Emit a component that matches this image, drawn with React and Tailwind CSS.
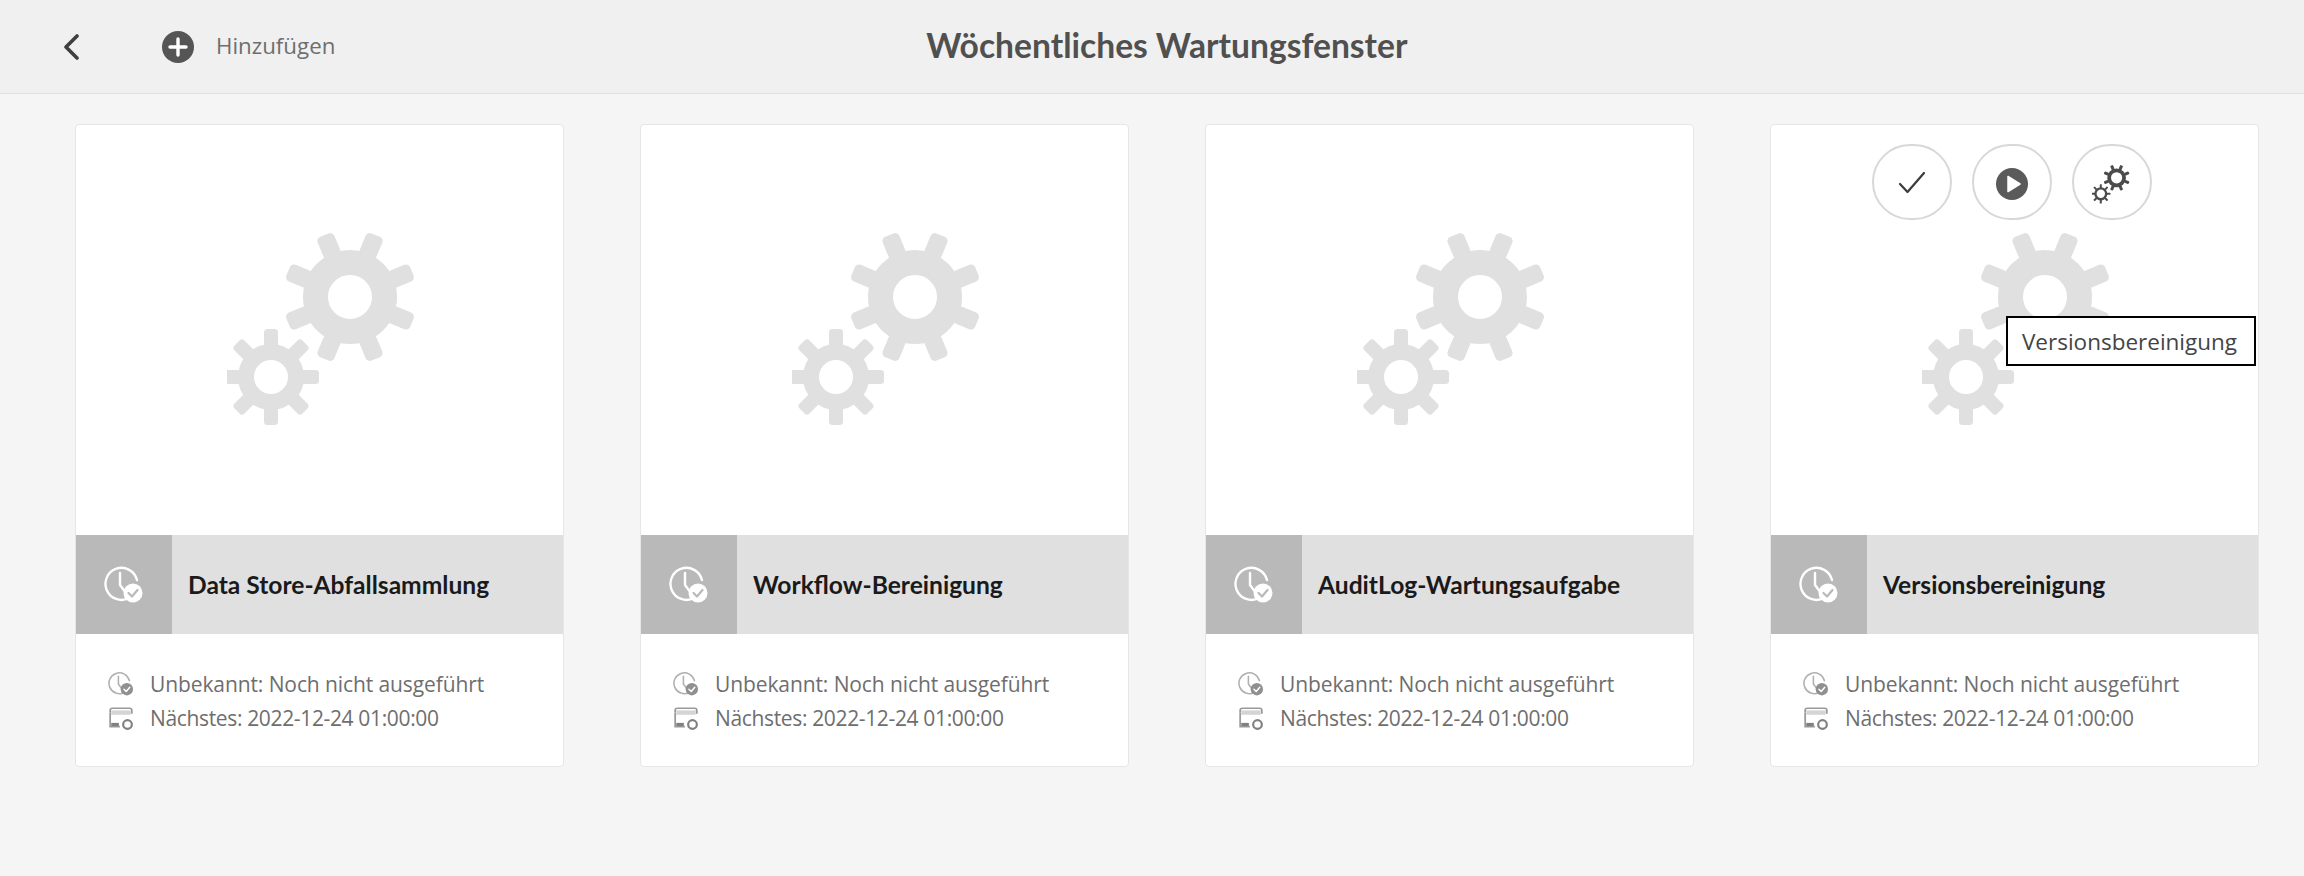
const tasks = ["Data Store-Abfallsammlung", "Workflow-Bereinigung", "AuditLog-Wartungsaufgabe", "Versionsbereinigung"];

function Gear({ cx, cy, body, hole, outer, tooth, rot }) {
  const angles = [0, 45, 90, 135, 180, 225, 270, 315];
  return (
    <g>
      <circle cx={cx} cy={cy} r={(body + hole) / 2} fill="none" stroke="currentColor" strokeWidth={body - hole} />
      {angles.map((a) => (
        <rect
          key={a}
          x={cx - tooth / 2}
          y={cy - outer}
          width={tooth}
          height={outer - body + 4}
          rx={tooth / 4}
          fill="currentColor"
          transform={`rotate(${a + rot} ${cx} ${cy})`}
        />
      ))}
    </g>
  );
}

function Gears({ className, thin }) {
  return (
    <svg viewBox="0 0 200 200" className={className}>
      <Gear cx={123} cy={69} body={47} hole={thin ? 28 : 22} outer={67} tooth={thin ? 15 : 18} rot={22.5} />
      <Gear cx={44} cy={149} body={33} hole={thin ? 21 : 17} outer={48} tooth={thin ? 10 : 14} rot={0} />
    </svg>
  );
}

function ClockCheck({ className, badge, mark }) {
  return (
    <svg viewBox="0 0 40 40" className={className} fill="none" stroke="currentColor">
      <path d="M25 33 A16 16 0 1 1 33 15" strokeWidth="2.4" strokeLinecap="round" />
      <path d="M16 8 V20 L22 28" strokeWidth="2.4" strokeLinecap="round" strokeLinejoin="round" />
      <circle cx="29" cy="28" r="9.5" fill={badge} stroke="none" />
      <path d="M24.5 28 L28 31.5 L33.5 25" stroke={mark} strokeWidth="2.2" strokeLinecap="round" strokeLinejoin="round" />
    </svg>
  );
}

function CalendarZero({ className }) {
  return (
    <svg viewBox="0 0 24 24" className={className} fill="none" stroke="#9a9a9a">
      <path d="M2 7 V5 Q2 3 4 3 H20 Q22 3 22 5 V8" strokeWidth="1.6" />
      <path d="M2 7 V20 H11" strokeWidth="1.6" />
      <rect x="3" y="5" width="18" height="4" fill="#d4d4d4" stroke="none" />
      <rect x="3" y="16.5" width="7" height="3" fill="#808080" stroke="none" />
      <circle cx="18" cy="18" r="4" strokeWidth="2" stroke="#808080" />
    </svg>
  );
}

function Card({ title, hovered }) {
  return (
    <div className="relative flex h-[643px] w-[488.6px] shrink-0 flex-col overflow-visible rounded-[4px] border border-[#e6e6e6] bg-white">
      <div className="flex h-[410px] items-center justify-center pb-[5px] text-[#e0e0e0]">
        <Gears className="ml-[16px] h-[200px] w-[200px]" />
      </div>
      <div className="flex h-[99px] items-stretch bg-[#e0e0e0]">
        <div className="flex w-[96px] items-center justify-center bg-[#b9b9b9] text-white">
          <ClockCheck className="h-[40px] w-[40px]" badge="#ffffff" mark="#b9b9b9" />
        </div>
        <div className="flex items-center pl-[16px] pt-[2px] font-['Lato',sans-serif] text-[24.6px] font-bold text-[#1a1a1a]">{title}</div>
      </div>
      <div className="flex flex-col pl-[32px] pt-[33px] font-['Open_Sans',sans-serif] text-[21px] leading-[34px] tracking-[-0.1px] text-[#6e6e6e]">
        <div className="flex items-center gap-[16px]">
          <ClockCheck className="h-[26px] w-[26px] text-[#b0b0b0]" badge="#909090" mark="#ffffff" />
          <span>Unbekannt: Noch nicht ausgeführt</span>
        </div>
        <div className="flex items-center gap-[16px]">
          <CalendarZero className="h-[26px] w-[26px]" />
          <span className="tracking-[-0.35px]">Nächstes: 2022-12-24 01:00:00</span>
        </div>
      </div>
      {hovered && (
        <>
          <div className="absolute left-[101px] top-[19px] flex gap-[20px]">
            <button className="flex h-[76px] w-[80px] items-center justify-center rounded-full border-2 border-[#d8d8d8] bg-white pt-[3px]">
              <svg viewBox="0 0 30 30" className="h-[30px] w-[30px]" fill="none" stroke="#3c3c3c" strokeWidth="2.2" strokeLinecap="round" strokeLinejoin="round">
                <path d="M3 15 L10.5 23 L27 4" />
              </svg>
            </button>
            <button className="flex h-[76px] w-[80px] items-center justify-center rounded-full border-2 border-[#d8d8d8] bg-white pt-[3px]">
              <svg viewBox="0 0 32 32" className="h-[32px] w-[32px]">
                <circle cx="16" cy="16" r="16" fill="#5a5a5a" />
                <path d="M12 8.5 L24 16 L12 23.5 Z" fill="#ffffff" stroke="#ffffff" strokeWidth="1.5" strokeLinejoin="round" />
              </svg>
            </button>
            <button className="flex h-[76px] w-[80px] items-center justify-center rounded-full border-2 border-[#d8d8d8] bg-white pt-[3px] text-[#4b4b4b]">
              <Gears thin className="h-[40px] w-[40px]" />
            </button>
          </div>
          <div className="absolute left-[235px] top-[191px] flex h-[50px] w-[250px] items-center border-2 border-black bg-white pl-[14px] pt-[2px] font-['Open_Sans',sans-serif] text-[22.5px] text-[#444444]">
            Versionsbereinigung
          </div>
        </>
      )}
    </div>
  );
}

export default function App() {
  return (
    <div className="h-[876px] w-[2304px] overflow-hidden bg-[#f5f5f5]">
      <header className="flex h-[94px] items-center border-b border-[#e0e0e0] bg-[#f0f0f0]">
        <svg viewBox="0 0 16 28" className="ml-[63px] h-[28px] w-[16px]" fill="none" stroke="#3f3f3f" strokeWidth="3.6" strokeLinecap="round" strokeLinejoin="round">
          <path d="M14 3 L3 14 L14 25" />
        </svg>
        <svg viewBox="0 0 32 32" className="ml-[83px] h-[32px] w-[32px]">
          <circle cx="16" cy="16" r="16" fill="#555555" />
          <path d="M16 8 V24 M8 16 H24" stroke="#ffffff" strokeWidth="3.4" strokeLinecap="round" />
        </svg>
        <span className="ml-[22px] mt-[-2px] font-['Open_Sans',sans-serif] text-[22.3px] text-[#6e6e6e]">Hinzufügen</span>
        <h1 className="ml-[591px] mt-[-3px] font-['Lato',sans-serif] text-[33.6px] font-bold text-[#505050]">Wöchentliches Wartungsfenster</h1>
      </header>
      <main className="flex gap-[76.4px] pl-[75px] pt-[30px]">
        {tasks.map((t, i) => (
          <Card key={t} title={t} hovered={i === 3} />
        ))}
      </main>
    </div>
  );
}
